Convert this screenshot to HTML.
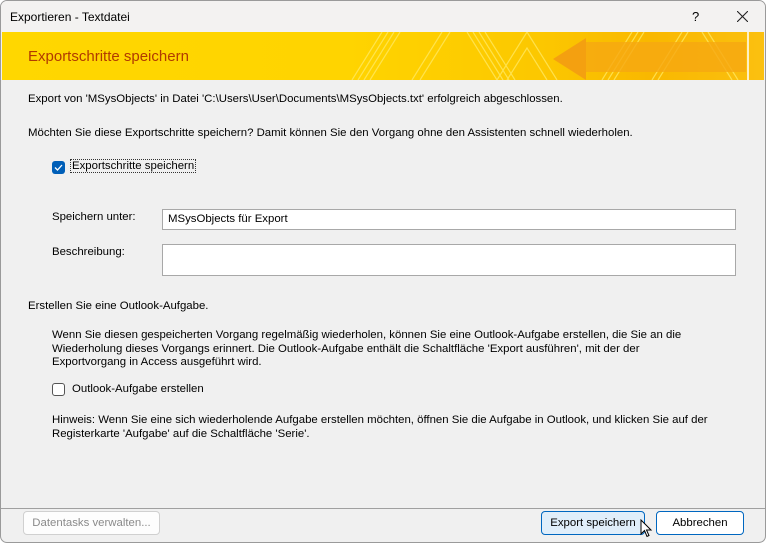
<!DOCTYPE html>
<html><head><meta charset="utf-8"><style>
body{margin:0;width:766px;height:543px;background:#fff;font-family:"Liberation Sans",sans-serif;font-size:11.4px;color:#000;overflow:hidden;position:relative}
.win{position:absolute;left:0;top:0;width:764px;height:541px;border:1px solid #9a9a9a;border-radius:7px;background:#f0f0f0;overflow:hidden}
.title{position:absolute;left:0;top:0;width:764px;height:31px;background:#f3f2f1}
.t{position:absolute;white-space:nowrap}
.banner{position:absolute;left:1px;top:31px;width:762px;height:48px;background:linear-gradient(90deg,#ffd700 0%,#ffd400 45%,#fcc800 70%,#f9b800 85%,#fbc010 100%);overflow:hidden}
.inp{position:absolute;background:#fff;border:1px solid #a8a8a8}
.btn{position:absolute;height:22px;border:1px solid #bdbdbd;border-radius:4px;background:#fdfdfd;text-align:center;line-height:22px}
</style></head><body><div class="win">
<div class="title"><span class="t" style="left:9px;top:9px;font-size:12px">Exportieren - Textdatei</span>
<span class="t" style="left:691px;top:8px;font-size:13px">?</span>
<svg style="position:absolute;left:736px;top:10px" width="11" height="11"><path d="M0 0L11 11M11 0L0 11" stroke="#222" stroke-width="1.1"/></svg></div>
<div class="banner">
<svg width="762" height="48" style="position:absolute;left:0;top:0">
<g stroke="#ffe860" stroke-width="1.2" fill="none" opacity=".8">
<path d="M350 48L380 0M356 48L386 0M362 48L392 0M368 48L398 0"/>
<path d="M465 0L495 48M471 0L501 48M477 0L507 48M483 0L513 48"/>
<path d="M410 48L440 0M418 48L448 0"/>
<path d="M495 48L525 0L555 48M505 48L525 16L545 48"/>
<path d="M600 48L630 0M606 48L636 0M612 48L642 0"/>
<path d="M650 48L680 0M656 48L686 0"/>
<path d="M700 0L730 48M706 0L736 48"/>
</g>
<path d="M551 27L584 6V48Z" fill="#f4a010"/>
<rect x="584" y="10" width="160" height="30" fill="#f6a812" opacity=".8"/>
<line x1="746" y1="0" x2="746" y2="48" stroke="#fff" stroke-width="1.5"/>
</svg>
<span class="t" style="left:26px;top:16px;font-size:15px;color:#b13a00">Exportschritte speichern</span></div>
<span class="t" style="left:27px;top:92px">Export von 'MSysObjects' in Datei 'C:\Users\User\Documents\MSysObjects.txt' erfolgreich abgeschlossen.</span>
<span class="t" style="left:27px;top:126px">Möchten Sie diese Exportschritte speichern? Damit können Sie den Vorgang ohne den Assistenten schnell wiederholen.</span>
<div style="position:absolute;left:51px;top:160px;width:13px;height:13px;background:#005fb8;border-radius:3px"><svg width="13" height="13"><path d="M3 6.5L5.5 9L10 4" stroke="#fff" stroke-width="1.3" fill="none"/></svg></div>
<span class="t" style="left:69px;top:158px;border:1px dotted #333;padding:0 1px">Exportschritte speichern</span>
<span class="t" style="left:51px;top:210px">Speichern unter:</span>
<div class="inp" style="left:161px;top:208px;width:572px;height:19px"><span class="t" style="left:5px;top:3px">MSysObjects für Export</span></div>
<span class="t" style="left:51px;top:245px">Beschreibung:</span>
<div class="inp" style="left:161px;top:243px;width:572px;height:30px"></div>
<span class="t" style="left:27px;top:299px">Erstellen Sie eine Outlook-Aufgabe.</span>
<span class="t" style="left:51px;top:328px;line-height:13.5px">Wenn Sie diesen gespeicherten Vorgang regelmäßig wiederholen, können Sie eine Outlook-Aufgabe erstellen, die Sie an die<br>Wiederholung dieses Vorgangs erinnert. Die Outlook-Aufgabe enthält die Schaltfläche 'Export ausführen', mit der der<br>Exportvorgang in Access ausgeführt wird.</span>
<div style="position:absolute;left:51px;top:382px;width:11px;height:11px;border:1px solid #555;border-radius:3px;background:#fff"></div>
<span class="t" style="left:71px;top:382px">Outlook-Aufgabe erstellen</span>
<span class="t" style="left:51px;top:413px;line-height:13.5px">Hinweis: Wenn Sie eine sich wiederholende Aufgabe erstellen möchten, öffnen Sie die Aufgabe in Outlook, und klicken Sie auf der<br>Registerkarte 'Aufgabe' auf die Schaltfläche 'Serie'.</span>
<div style="position:absolute;left:0;top:507px;width:764px;height:1px;background:#a0a0a0"></div>
<div class="btn" style="left:22px;top:510px;width:135px;color:#8a8a8a;border-color:#d0d0d0">Datentasks verwalten...</div>
<div class="btn" style="left:540px;top:510px;width:102px;background:#e0eefa;border-color:#0067c0">Export speichern</div>
<div class="btn" style="left:655px;top:510px;width:86px;border-color:#0067c0;background:#fff">Abbrechen</div>
<svg style="position:absolute;left:639px;top:518px" width="14" height="20"><path d="M1 1V15L4.5 11.5L7 17.5L9 16.5L6.5 11H11Z" fill="#fff" stroke="#000" stroke-width="1"/></svg>
</div></body></html>
